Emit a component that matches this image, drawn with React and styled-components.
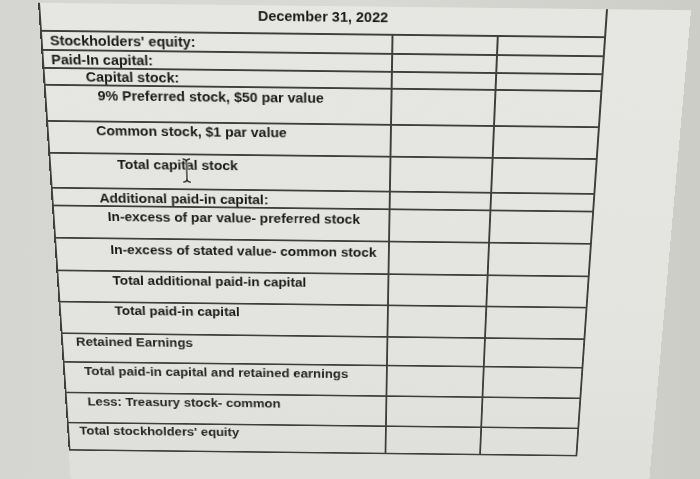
import React from "react";
import styled, { createGlobalStyle } from "styled-components";

const GlobalStyle = createGlobalStyle`
  html, body {
    margin: 0;
    padding: 0;
    overflow: hidden;
    background: linear-gradient(90deg, #d5d5d1 0%, #d9d9d5 50%, #cdcdc8 100%);
  }
  #root { width: 700px; height: 479px; overflow: hidden; }
`;

const Page = styled.div`
  width: 700px;
  height: 479px;
  box-sizing: border-box;
  padding: 0 0 0 37.5px;
  overflow: hidden;
`;

const Screen = styled.div`
  width: 652.5px;
  height: 640px;
  box-sizing: border-box;
  padding-top: 6px;
  background: linear-gradient(
    180deg,
    rgba(0, 0, 0, 0) 0,
    rgba(0, 0, 0, 0) 6px,
    #e6e6e2 6px,
    #e3e3df 60%,
    #dcdcd8 100%
  );
  transform-origin: 285px 6px;
  transform: skewY(0.65deg) perspective(1000px) rotateX(-13.55deg);
`;

const line = "2px solid #3e3e3b";

const Sheet = styled.div`
  width: 570px;
  box-sizing: border-box;
  border-left: ${line};
  border-right: ${line};
  border-bottom: ${line};
  font-family: "Liberation Sans", Arial, sans-serif;
  font-weight: 700;
  font-size: 14.5px;
  line-height: 17px;
  color: #1a1a1a;
`;

const HeaderRow = styled.div`
  height: 30px;
  box-sizing: border-box;
  border-bottom: ${line};
  display: flex;
  align-items: center;
  justify-content: center;
  padding-bottom: 5px;
`;

const Row = styled.div`
  display: grid;
  grid-template-columns: 354px 106px 1fr;
  height: ${(p) => p.$h}px;
  box-sizing: border-box;
  border-bottom: ${(p) => (p.$last ? "none" : line)};
`;

const Label = styled.div`
  position: relative;
  box-sizing: border-box;
  border-right: ${line};
  padding-left: ${(p) => p.$indent}px;
  padding-top: ${(p) => p.$top}px;
  white-space: nowrap;
  color: ${(p) => (p.$soft ? "#262626" : "#1a1a1a")};
`;

const Amount = styled.div`
  box-sizing: border-box;
  border-right: ${(p) => (p.$end ? "none" : line)};
`;

const Cursor = styled.svg`
  position: absolute;
  left: 136px;
  top: 2px;
  width: 10px;
  height: 30px;
`;

const rows = [
  { label: "Stockholders' equity:", indent: 7.5, top: 1, h: 20 },
  { label: "Paid-In capital:", indent: 7.5, top: 1, h: 19 },
  { label: "Capital stock:", indent: 41.5, top: 0, h: 18 },
  { label: "9% Preferred stock, $50 par value", indent: 52.5, top: 2, h: 39 },
  { label: "Common stock, $1 par value", indent: 49, top: 1, h: 35 },
  { label: "Total capital stock", indent: 69, top: 3, h: 39, cursor: true },
  { label: "Additional paid-in capital:", indent: 48.5, top: 1.5, h: 20 },
  { label: "In-excess of par value- preferred stock", indent: 56, top: 2.5, h: 37 },
  { label: "In-excess of stated value- common stock", indent: 57, top: 4, h: 38 },
  { label: "Total additional paid-in capital", indent: 57.5, top: 2, h: 37 },
  { label: "Total paid-in capital", indent: 58, top: 0.5, h: 38 },
  { label: "Retained Earnings", indent: 14, top: 0.5, h: 35, soft: true },
  { label: "Total paid-in capital and retained earnings", indent: 21, top: 1.5, h: 38, soft: true },
  { label: "Less: Treasury stock- common", indent: 22.5, top: 1.5, h: 38, soft: true },
  { label: "Total stockholders' equity", indent: 11.5, top: 0.5, h: 33, soft: true },
];

const beam =
  "M1.5 2 Q5 2.5 5 5 V25 Q5 27.5 1.5 28 M8.5 2 Q5 2.5 5 5 M8.5 28 Q5 27.5 5 25";

function IBeam() {
  return (
    <Cursor viewBox="0 0 10 30" fill="none">
      <path d={beam} stroke="#f2f2ee" strokeWidth="3" strokeLinecap="round" />
      <path d={beam} stroke="#1a1a1a" strokeWidth="1.3" strokeLinecap="round" />
    </Cursor>
  );
}

export default function App() {
  return (
    <>
      <GlobalStyle />
      <Page>
        <Screen>
          <Sheet>
            <HeaderRow>December 31, 2022</HeaderRow>
            {rows.map((r, i) => (
              <Row key={r.label} $h={r.h} $last={i === rows.length - 1}>
                <Label $indent={r.indent} $top={r.top} $soft={r.soft}>
                  {r.label}
                  {r.cursor && <IBeam />}
                </Label>
                <Amount />
                <Amount $end />
              </Row>
            ))}
          </Sheet>
        </Screen>
      </Page>
    </>
  );
}
